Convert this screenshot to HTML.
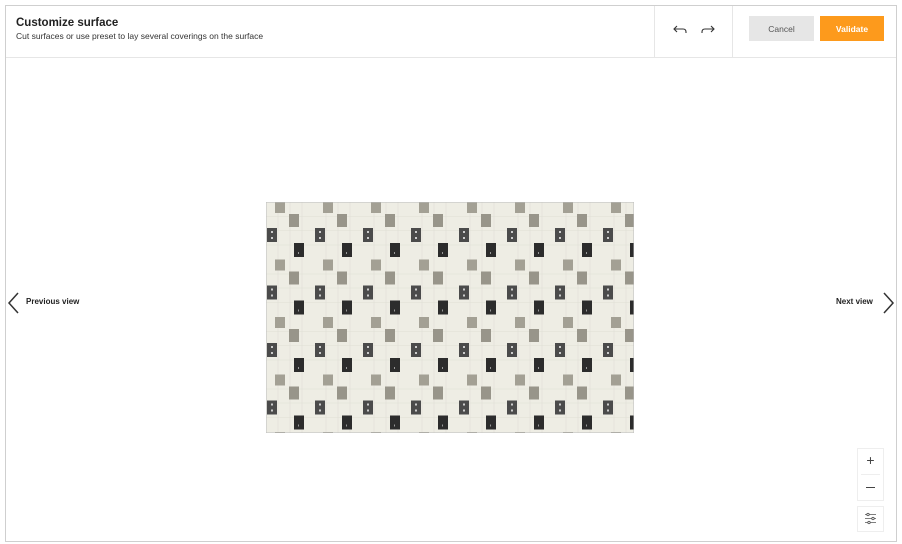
<!DOCTYPE html>
<html><head><meta charset="utf-8"><style>
*{margin:0;padding:0;box-sizing:border-box}
body{width:902px;height:544px;background:#fff;font-family:"Liberation Sans",sans-serif;position:relative;overflow:hidden}
.frame{position:absolute;left:5px;top:5px;width:892px;height:537px;border:1px solid #cfcfcf}
.hdr{position:absolute;left:6px;top:6px;width:890px;height:52px;border-bottom:1px solid #e6e6e6}
h1{position:absolute;left:10px;top:11px;font-size:11.5px;font-weight:bold;color:#222}
.sub{position:absolute;left:10px;top:25px;font-size:8.5px;color:#333}
.div{position:absolute;top:0;width:1px;height:51px;background:#e6e6e6}
.btn{position:absolute;top:10px;height:25px;font-size:8.5px;display:flex;align-items:center;justify-content:center}
.nav{position:absolute;top:297px;font-size:8px;font-weight:bold;color:#222}
.zb{position:absolute;left:857px;width:27px;border:1px solid #eee;background:#fff}
</style></head><body>
<div class="frame"></div>
<div class="hdr">
<h1>Customize surface</h1>
<div class="sub">Cut surfaces or use preset to lay several coverings on the surface</div>
<div class="div" style="left:648px"></div>
<div class="div" style="left:726px"></div>
<svg style="position:absolute;left:666px;top:16px" width="44" height="14" viewBox="0 0 44 14" fill="none" stroke="#333" stroke-width="1.1"><path d="M5 4 L2 7 L5 10 M2 7 H11 Q14 7 14 10 V11"/><path d="M39 4 L42 7 L39 10 M42 7 H33 Q30 7 30 10 V11"/></svg>
<div class="btn" style="left:743px;width:65px;background:#e6e6e6;color:#555">Cancel</div>
<div class="btn" style="left:814px;width:64px;background:#fd9a1c;color:#fff;font-weight:bold">Validate</div>
</div>
<svg style="position:absolute;left:266px;top:202px" width="368" height="231">
<defs><pattern id="p" width="48" height="57.5" patternUnits="userSpaceOnUse">
<rect width="48" height="57.5" fill="#eeede4"/>
<path d="M0 14.5H48M0 28.5H48M0 43H48M12 0V57.5M24 0V57.5M36 0V57.5" stroke="#e0dfd5" stroke-width="0.6"/>
<rect x="9" y="0" width="10" height="11" fill="#a3a094"/>
<rect x="23" y="12" width="10" height="13" fill="#98958a"/>
<rect x="1" y="26" width="10" height="14" fill="#4b4b4b"/>
<rect x="5" y="29" width="2" height="2" fill="#ccc"/><rect x="5" y="35" width="2" height="2" fill="#ccc"/>
<rect x="28" y="41" width="10" height="14" fill="#2c2c2c"/>
<rect x="32" y="50" width="1" height="2" fill="#999"/>
</pattern></defs>
<rect width="368" height="231" fill="url(#p)" stroke="#bbb"/>
</svg>
<svg style="position:absolute;left:7px;top:292px" width="14" height="22" fill="none" stroke="#333" stroke-width="1.5"><path d="M11 1 L2 11 L11 21"/></svg>
<div class="nav" style="left:26px">Previous view</div>
<div class="nav" style="left:836px">Next view</div>
<svg style="position:absolute;left:881px;top:292px" width="14" height="22" fill="none" stroke="#333" stroke-width="1.5"><path d="M3 1 L12 11 L3 21"/></svg>
<div class="zb" style="top:448px;height:53px"></div>
<div style="position:absolute;left:861px;top:474px;width:19px;height:1px;background:#eee"></div>
<div style="position:absolute;left:857px;top:452px;width:27px;text-align:center;font-size:14px;color:#444">+</div>
<div style="position:absolute;left:866px;top:487px;width:9px;height:1px;background:#444"></div>
<div class="zb" style="top:506px;height:26px"></div>
<svg style="position:absolute;left:864px;top:512px" width="13" height="13" stroke="#555" stroke-width="0.8" fill="#fff"><path d="M1 2.5H12M1 6.5H12M1 10.5H12"/><circle cx="4" cy="2.5" r="1.2"/><circle cx="9" cy="6.5" r="1.2"/><circle cx="5" cy="10.5" r="1.2"/></svg>
</body></html>
